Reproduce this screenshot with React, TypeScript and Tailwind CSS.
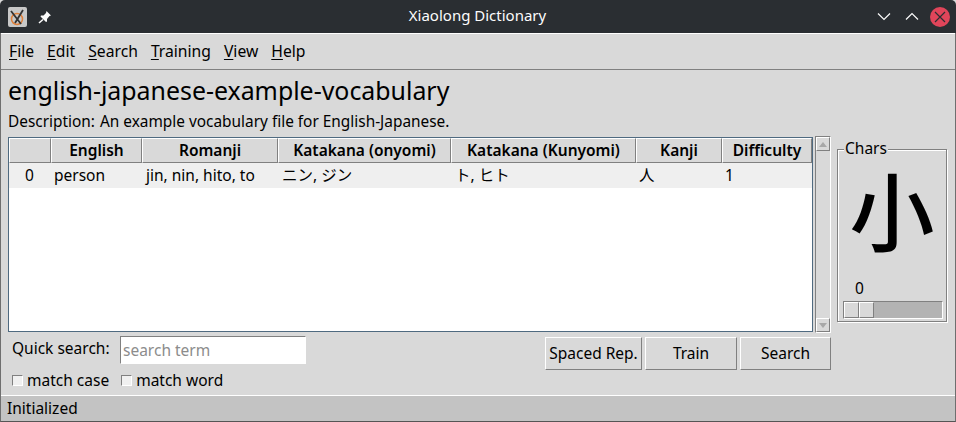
const bevel = "border border-t-white border-l-white border-r-[#808080] border-b-[#808080]";
const sunken = "border border-t-[#808080] border-l-[#808080] border-r-white border-b-white";

function U({ children }: { children: string }) {
  return <span className="underline decoration-1 underline-offset-2">{children}</span>;
}

const columns = [
  { label: "", w: "w-[42px]" },
  { label: "English", w: "w-[91px]" },
  { label: "Romanji", w: "w-[136px]" },
  { label: "Katakana (onyomi)", w: "w-[173px]" },
  { label: "Katakana (Kunyomi)", w: "w-[185px]" },
  { label: "Kanji", w: "w-[86px]" },
  { label: "Difficulty", w: "w-[90px]" },
];

const cells = [
  { t: "0", w: "w-[42px]", c: "text-center pr-[1px]" },
  { t: "person", w: "w-[91px]", c: "pl-[3px]" },
  { t: "jin, nin, hito, to", w: "w-[136px]", c: "pl-[4px]" },
  { t: "ニン, ジン", w: "w-[173px]", c: "pl-[4px]" },
  { t: "ト, ヒト", w: "w-[185px]", c: "pl-[4px]" },
  { t: "人", w: "w-[86px]", c: "pl-[3px]" },
  { t: "1", w: "w-[90px]", c: "pl-[3px]" },
];

function Check({ label }: { label: string }) {
  return (
    <div className="flex items-center gap-[4px]">
      <span className={`w-[11px] h-[11px] bg-[#f0f0f0] ${sunken}`} />
      <span>{label}</span>
    </div>
  );
}

export default function App() {
  return (
    <div
      className="w-[956px] h-[422px] flex flex-col bg-[#d9d9d9] text-[#000] text-[15.5px] leading-[20px] overflow-hidden"
      style={{ fontFamily: '"Noto Sans", "Noto Sans CJK JP", sans-serif' }}
    >
      {/* title bar */}
      <div className="h-[33px] shrink-0 bg-[#2a2e32] rounded-t-[5px] flex items-center pl-[8px] pr-[6px] text-[#fcfcfc]">
        <svg width="19" height="20" viewBox="0 0 19 20" className="shrink-0">
          <rect width="19" height="20" rx="2" fill="#c8c8c8" />
          <circle cx="9" cy="12" r="5.5" fill="none" stroke="#e0803a" strokeWidth="1.5" />
          <path d="M3 4 L13 17 M15 3 L7 16" stroke="#333" strokeWidth="1.8" fill="none" />
        </svg>
        <svg width="14" height="14" viewBox="0 0 14 14" className="ml-[11px] shrink-0">
          <path d="M8.5 1 L13 5.5 L11.5 6 L9 9 L9 11.5 L8 12 L2.5 6.5 L3 5.5 L5.5 5.5 L8 3 Z" fill="#fcfcfc" />
          <path d="M5 9.5 L1 13" stroke="#fcfcfc" strokeWidth="1.5" />
        </svg>
        <div className="flex-1 text-center text-[15px] pl-[25px] pb-[3px]">Xiaolong Dictionary</div>
        <svg width="14" height="9" viewBox="0 0 14 9" className="shrink-0 -ml-[1px]">
          <path d="M1 1.5 L7 7.5 L13 1.5" stroke="#fcfcfc" strokeWidth="1.2" fill="none" />
        </svg>
        <svg width="14" height="9" viewBox="0 0 14 9" className="ml-[14px] shrink-0">
          <path d="M1 7.5 L7 1.5 L13 7.5" stroke="#fcfcfc" strokeWidth="1.2" fill="none" />
        </svg>
        <svg width="20" height="20" viewBox="0 0 20 20" className="ml-[11px] shrink-0">
          <circle cx="10" cy="10" r="10" fill="#e0455a" />
          <path d="M5 5 L15 15 M15 5 L5 15" stroke="#2a2e32" strokeWidth="1.2" />
        </svg>
      </div>

      {/* window body */}
      <div className="flex-1 flex flex-col min-h-0 border-x border-b border-x-[#6f6f6f] border-b-[#555]">
        {/* menu */}
        <div className="h-[37px] shrink-0 flex items-center pl-[8px] gap-[13px] pb-[2px] text-[15.7px] border-t border-t-white border-b border-b-[#808080]">
          <span><U>F</U>ile</span>
          <span><U>E</U>dit</span>
          <span><U>S</U>earch</span>
          <span><U>T</U>raining</span>
          <span><U>V</U>iew</span>
          <span><U>H</U>elp</span>
        </div>

        {/* main */}
        <div className="flex-1 flex flex-col min-h-0 pl-[7px] pr-[7px]">
          <div className="text-[24.9px] leading-[32px] mt-[4px]">english-japanese-example-vocabulary</div>
          <div className="text-[15.4px] leading-[20px] mt-[6px]">Description:<span className="ml-[5px]">An example vocabulary file for English-Japanese.</span></div>

          <div className="flex mt-[4px] items-start">
            {/* table */}
            <div className="w-[805px] h-[195px] mt-[1px] bg-white border border-[#4f6a80] flex flex-col">
              <div className="flex h-[25px] shrink-0 bg-[#d9d9d9] font-semibold">
                {columns.map((c) => (
                  <div key={c.label} className={`${c.w} ${bevel} flex items-center justify-center pb-[1px]`}>{c.label}</div>
                ))}
              </div>
              <div className="flex h-[25px] shrink-0 bg-[#efefef] items-center pb-[1px]">
                {cells.map((c) => (
                  <div key={c.t} className={`${c.w} ${c.c}`}>{c.t}</div>
                ))}
              </div>
            </div>

            {/* scrollbar */}
            <div className={`w-[16px] h-[197px] ml-[2px] flex flex-col ${sunken}`}>
              <div className={`h-[14px] shrink-0 flex items-center justify-center ${bevel}`}>
                <svg width="8" height="5" viewBox="0 0 8 5"><path d="M0 5 L4 0 L8 5 Z" fill="#a8a8a8" /></svg>
              </div>
              <div className="flex-1" />
              <div className={`h-[14px] shrink-0 flex items-center justify-center ${bevel}`}>
                <svg width="8" height="5" viewBox="0 0 8 5"><path d="M0 0 L4 5 L8 0 Z" fill="#a8a8a8" /></svg>
              </div>
            </div>

            {/* chars */}
            <div className="relative w-[110px] h-[173px] ml-[6px] mt-[13px] border border-[#808080] shadow-[inset_1px_1px_0_white,1px_1px_0_white] px-[5px] flex flex-col">
              <div className="absolute left-[6px] -top-[12px] px-[1px] bg-[#d9d9d9] leading-[20px]">Chars</div>
              <div className="h-[96px] mt-[14px] text-[85px] leading-[96px] text-center font-medium">小</div>
              <div className="pl-[12px] mt-[18px] leading-[20px]">0</div>
              <div className={`h-[18px] w-[100px] mt-[3px] bg-[#b3b3b3] flex ${sunken}`}>
                <div className={`w-[15px] bg-[#d9d9d9] ${bevel}`} />
                <div className={`w-[15px] bg-[#d9d9d9] ${bevel}`} />
              </div>
            </div>
          </div>

          {/* bottom controls */}
          <div className="flex mt-[3px] items-start">
            <div className="flex flex-col">
              <div className="flex items-center pl-[4px]">
                <span className="w-[108px] pb-[4px]">Quick search:</span>
                <div className={`w-[186px] h-[28px] bg-white flex items-center pl-[2px] text-[#8c8c8c] ${sunken}`}>search term</div>
              </div>
              <div className="flex items-center gap-[12px] pl-[4px] mt-[6px]">
                <Check label="match case" />
                <Check label="match word" />
              </div>
            </div>
            <div className="flex gap-[3px] ml-[239px] mt-[1px]">
              <div className={`w-[97px] h-[33px] flex items-center justify-center pb-[2px] ${bevel}`}>Spaced Rep.</div>
              <div className={`w-[92px] h-[33px] flex items-center justify-center pb-[2px] ${bevel}`}>Train</div>
              <div className={`w-[91px] h-[33px] flex items-center justify-center pb-[2px] ${bevel}`}>Search</div>
            </div>
          </div>
        </div>

        {/* status */}
        <div className="h-[26px] shrink-0 bg-[#c3c3c3] border-t border-t-white pl-[6px] flex items-center pb-[1px]">Initialized</div>
      </div>
    </div>
  );
}
